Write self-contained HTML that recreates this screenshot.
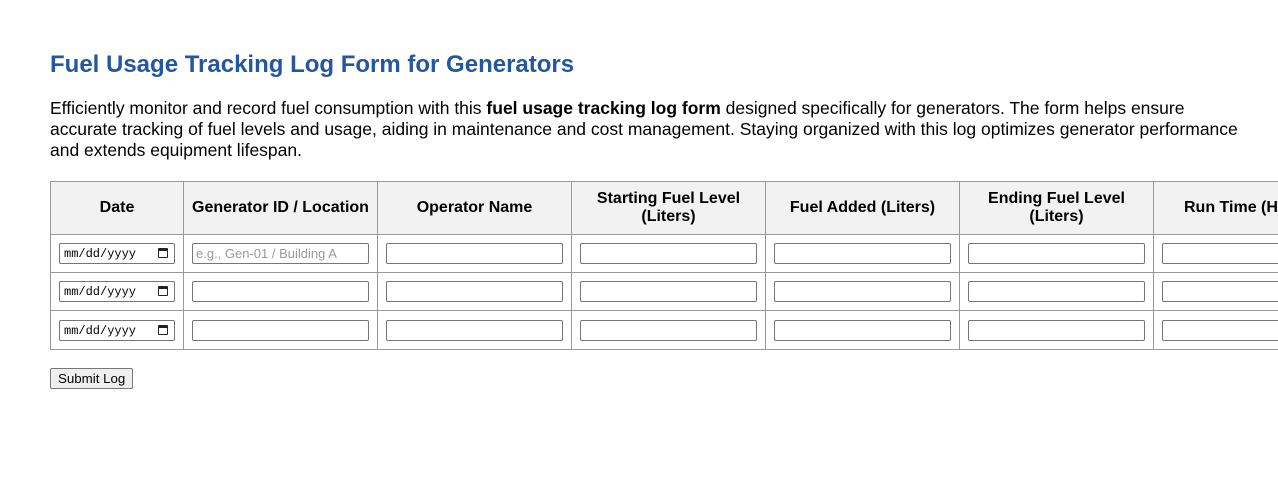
<!DOCTYPE html>
<html><head><meta charset="utf-8"><style>
html,body{margin:0;padding:0;background:#fff;overflow:hidden;width:1278px;height:486px}
body{font-family:"Liberation Sans",Arial,sans-serif;color:#000;position:relative}
h1{position:absolute;left:50px;top:51px;margin:0;font-size:24px;font-weight:bold;color:#2456a4;line-height:28px;white-space:nowrap}
p{position:absolute;left:50px;top:98px;width:1200px;margin:0;font-size:17.5px;line-height:21px}
table{position:absolute;left:50px;top:181px;border-collapse:collapse;table-layout:fixed;width:1359px}
th,td{border:1px solid #999;padding:0 8px;box-sizing:border-box}
th{background:#f2f2f2;font-size:16px;font-weight:bold;height:53px;line-height:18px;text-align:center}
td{height:38px}
tr.r3 td{height:39px}
input{box-sizing:border-box;height:21px;width:177px;border:1px solid #767676;border-radius:2px;font-family:"Liberation Sans",Arial,sans-serif;font-size:13px;padding:1px 3px;margin:0;display:block;color:#999}
.d{box-sizing:border-box;height:21px;border:1px solid #767676;border-radius:2px;width:116px;font-family:"Liberation Mono",monospace;font-size:12px;color:#000;position:relative;padding:3px 4px;line-height:14px}
.d span{position:absolute;right:6px;top:4px;width:10px;height:10px;border:1.5px solid #222;border-top-width:3px;border-radius:1px;box-sizing:border-box}
button{position:absolute;left:50px;top:368px;height:21px;padding:0 7px;font-family:"Liberation Sans",Arial,sans-serif;font-size:13.3px;background:#efefef;border:1px solid #767676;border-radius:2px}
</style></head><body>
<h1>Fuel Usage Tracking Log Form for Generators</h1>
<p>Efficiently monitor and record fuel consumption with this <b>fuel usage tracking log form</b> designed specifically for generators. The form helps ensure accurate tracking of fuel levels and usage, aiding in maintenance and cost management. Staying organized with this log optimizes generator performance and extends equipment lifespan.</p>
<table>
<colgroup><col style="width:133px"><col style="width:194px"><col style="width:194px"><col style="width:194px"><col style="width:194px"><col style="width:194px"><col style="width:256px"></colgroup>
<tr><th>Date</th><th>Generator ID / Location</th><th>Operator Name</th><th>Starting Fuel Level<br>(Liters)</th><th>Fuel Added (Liters)</th><th>Ending Fuel Level<br>(Liters)</th><th style="text-align:left;padding-left:30px">Run Time (Hours)</th></tr>
<tr><td><div class="d">mm/dd/yyyy<span></span></div></td><td><input value="e.g., Gen-01 / Building A"></td><td><input></td><td><input></td><td><input></td><td><input></td><td><input></td></tr>
<tr><td><div class="d">mm/dd/yyyy<span></span></div></td><td><input></td><td><input></td><td><input></td><td><input></td><td><input></td><td><input></td></tr>
<tr class="r3"><td><div class="d">mm/dd/yyyy<span></span></div></td><td><input></td><td><input></td><td><input></td><td><input></td><td><input></td><td><input></td></tr>
</table>
<button>Submit Log</button>
</body></html>
